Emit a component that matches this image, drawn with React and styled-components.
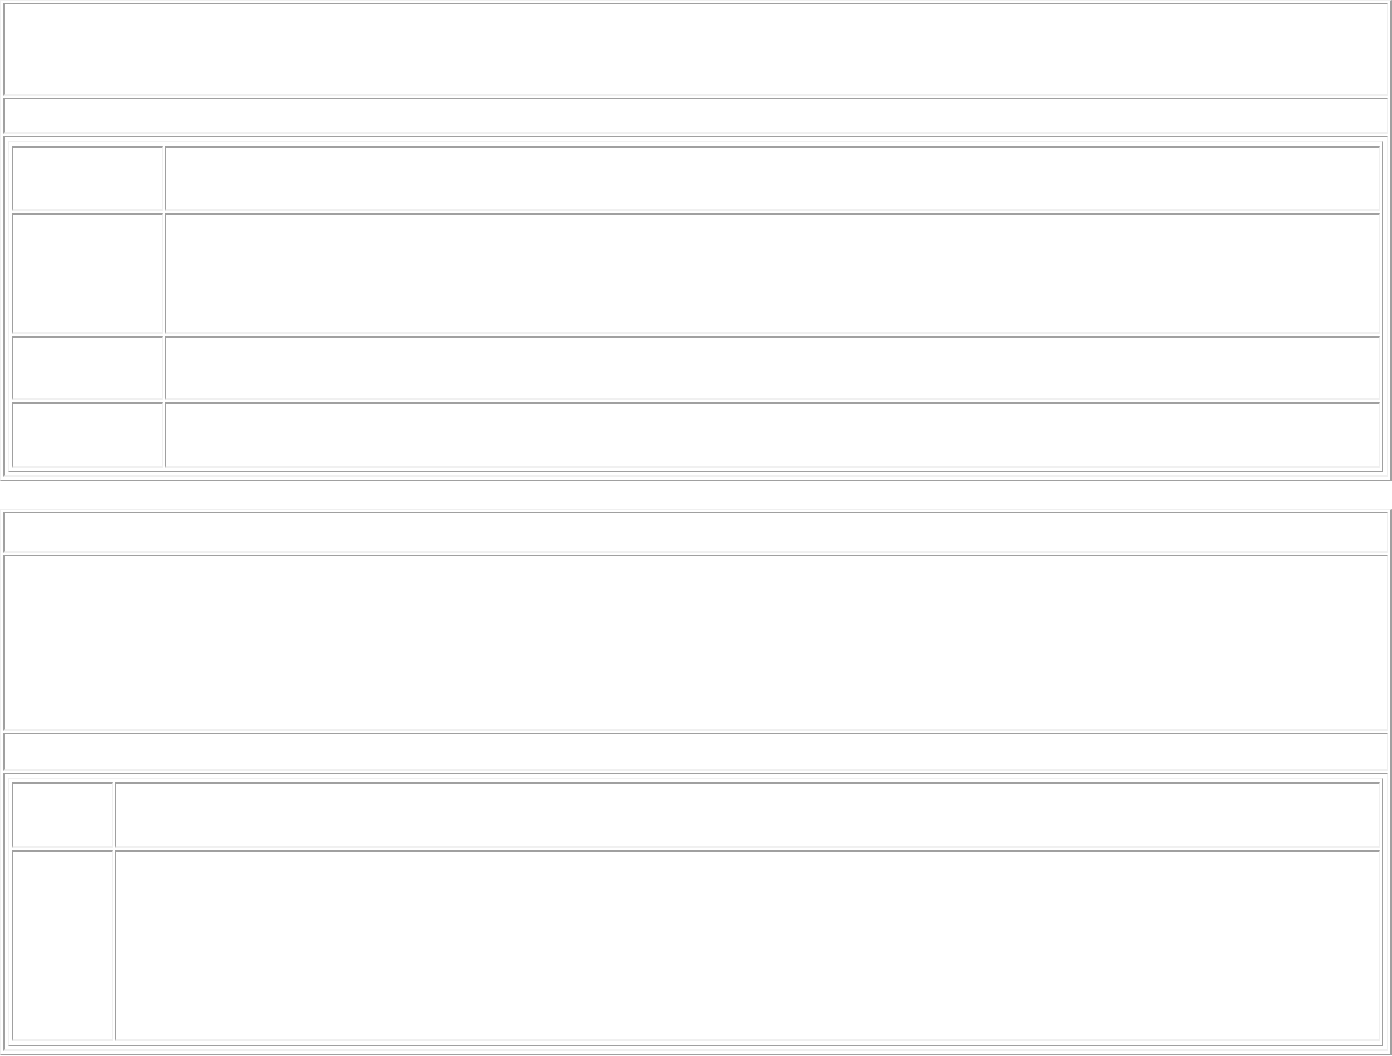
import React from "react";
import styled, { createGlobalStyle } from "styled-components";

const dark = "#a0a0a0";
const light = "#f0f0f0";

const GlobalStyle = createGlobalStyle`
  html, body {
    margin: 0;
    padding: 0;
    background: #ffffff;
    font-family: "Liberation Serif", serif;
  }
`;

const Page = styled.div`
  display: flex;
  flex-direction: column;
  gap: 28px;
  width: 1392px;
`;

// outset frame, like a table with border="1"
const Frame = styled.div`
  display: flex;
  flex-direction: column;
  gap: 2px;
  box-sizing: border-box;
  border-style: solid;
  border-width: 1px 2px 1px 1px;
  border-color: ${light} ${dark} ${dark} ${light};
  padding: 2px 2px 3px 2px;
  width: 100%;
  height: ${(p) => p.$h}px;
`;

const NestedFrame = styled(Frame)`
  flex: 1;
  height: auto;
  border-width: 1px;
  padding: ${(p) => p.$pad || "3px 2px 3px 3px"};
`;

// inset cell
const Band = styled.div`
  box-sizing: border-box;
  display: flex;
  flex-direction: column;
  height: ${(p) => p.$h}px;
  border-style: solid;
  border-width: 1px 1px 2px 2px;
  border-color: ${dark} ${light} ${light} ${dark};
  padding: ${(p) => (p.$holder ? "4px 4px 3px 3px" : "1px")};
`;

const Row = styled.div`
  display: flex;
  gap: 2px;
  height: ${(p) => (p.$h ? `${p.$h}px` : "auto")};
  flex: ${(p) => (p.$h ? "none" : 1)};
`;

const GridCell = styled.div`
  box-sizing: border-box;
  border-style: solid;
  border-width: 2px 1px 2px 1px;
  border-color: ${dark} ${light} ${light} ${dark};
  width: ${(p) => (p.$w ? `${p.$w}px` : "auto")};
  flex: ${(p) => (p.$w ? "none" : 1)};
`;

const Grid = ({ labelWidth, rows, pad }) => (
  <NestedFrame $pad={pad}>
    {rows.map((h, i) => (
      <Row key={i} $h={h}>
        <GridCell $w={labelWidth} />
        <GridCell />
      </Row>
    ))}
  </NestedFrame>
);

export default function App() {
  return (
    <>
      <GlobalStyle />
      <Page>
        <Frame $h={481}>
          <Band $h={93} />
          <Band $h={36} />
          <Band $h={341} $holder>
            <Grid labelWidth={151} rows={[65, 121, 64, null]} pad="4px 2px 3px 3px" />
          </Band>
        </Frame>
        <Frame $h={546}>
          <Band $h={41} />
          <Band $h={176} />
          <Band $h={38} />
          <Band $h={278} $holder>
            <Grid labelWidth={101} rows={[66, null]} pad="3px 2px 4px 3px" />
          </Band>
        </Frame>
      </Page>
    </>
  );
}
